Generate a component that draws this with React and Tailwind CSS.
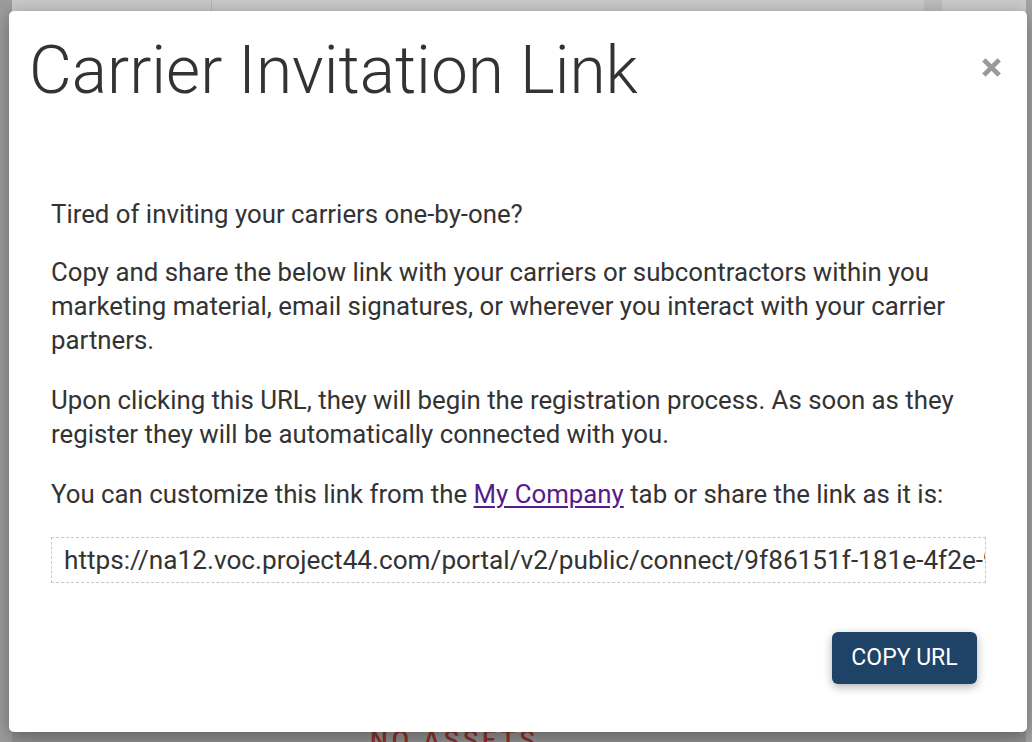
import React from "react";

const CloseIcon = () => (
  <svg viewBox="0 0 24 24" className="w-[23px] h-[23px]" fill="none" stroke="#9a9a9a" strokeWidth={5} strokeLinecap="butt">
    <path d="M4 4L20 20M20 4L4 20" />
  </svg>
);

const App = () => {
  const url = "https://na12.voc.project44.com/portal/v2/public/connect/9f86151f-181e-4f2e-9b1c-7c1f2d7e3a41";

  return (
    <div className="relative w-[1032px] h-[742px] overflow-hidden bg-[#c6c6c6] font-['Roboto',sans-serif]">
      {/* page behind the dialog */}
      <div className="absolute inset-0 flex">
        <div className="w-[212px] border-r border-[#b4b4b4] bg-[#c9c9c9]" />
        <div className="flex-1 bg-[#cacaca]" />
        <div className="w-[18px] bg-[#bdbdbd]" />
        <div className="w-[90px] bg-[#cbcbcb]" />
      </div>
      <div className="absolute left-0 bottom-0 w-full h-[14px] bg-[#8f8f8f]" />
      <div className="absolute left-0 top-0 w-[12px] h-full bg-[#9c9c9c]" />
      <div className="absolute right-0 top-0 w-[6px] h-full bg-[#a3a3a3]" />
      <div className="absolute left-[370px] top-[722px] text-[25px] font-medium tracking-[4px] text-[#8a302a]">NO ASSETS</div>

      {/* dialog */}
      <div className="absolute left-[9px] top-[11px] w-[1018px] h-[721px] bg-white rounded-[5px] shadow-[0_4px_18px_rgba(0,0,0,0.35)] flex flex-col">
        <div className="flex items-start justify-between pl-[20px] pr-[24px] pt-[22px]">
          <h1 className="text-[65.8px] font-light leading-[76px] text-[#333]">Carrier Invitation Link</h1>
          <button className="mt-[23px]">
            <CloseIcon />
          </button>
        </div>

        <div className="px-[42px] pt-[88px] text-[25.8px] leading-[34px] text-[#333]">
          <p className="mb-[24px]">Tired of inviting your carriers one-by-one?</p>
          <p className="mb-[26px]">
            Copy and share the below link with your carriers or subcontractors within you marketing material, email signatures, or wherever you interact with your carrier partners.
          </p>
          <p className="mb-[26px]">
            Upon clicking this URL, they will begin the registration process. As soon as they register they will be automatically connected with you.
          </p>
          <p className="mb-[26px]">
            You can customize this link from the{" "}
            <a href="#" className="text-[#551a8b] underline underline-offset-[3px]">My Company</a>{" "}
            tab or share the link as it is:
          </p>
          <div className="w-[935px] h-[46px] border border-dashed border-[#c8c8c8] px-[12px] flex items-center overflow-hidden whitespace-nowrap text-[26.2px]">
            {url}
          </div>
        </div>

        <div className="flex justify-end pr-[50px] pt-[49px]">
          <button className="h-[52px] w-[145px] rounded-[6px] bg-[#1f4267] text-white text-[23px] shadow-[0_3px_10px_rgba(0,0,0,0.3)]">
            COPY URL
          </button>
        </div>
      </div>
    </div>
  );
};

export default App;
